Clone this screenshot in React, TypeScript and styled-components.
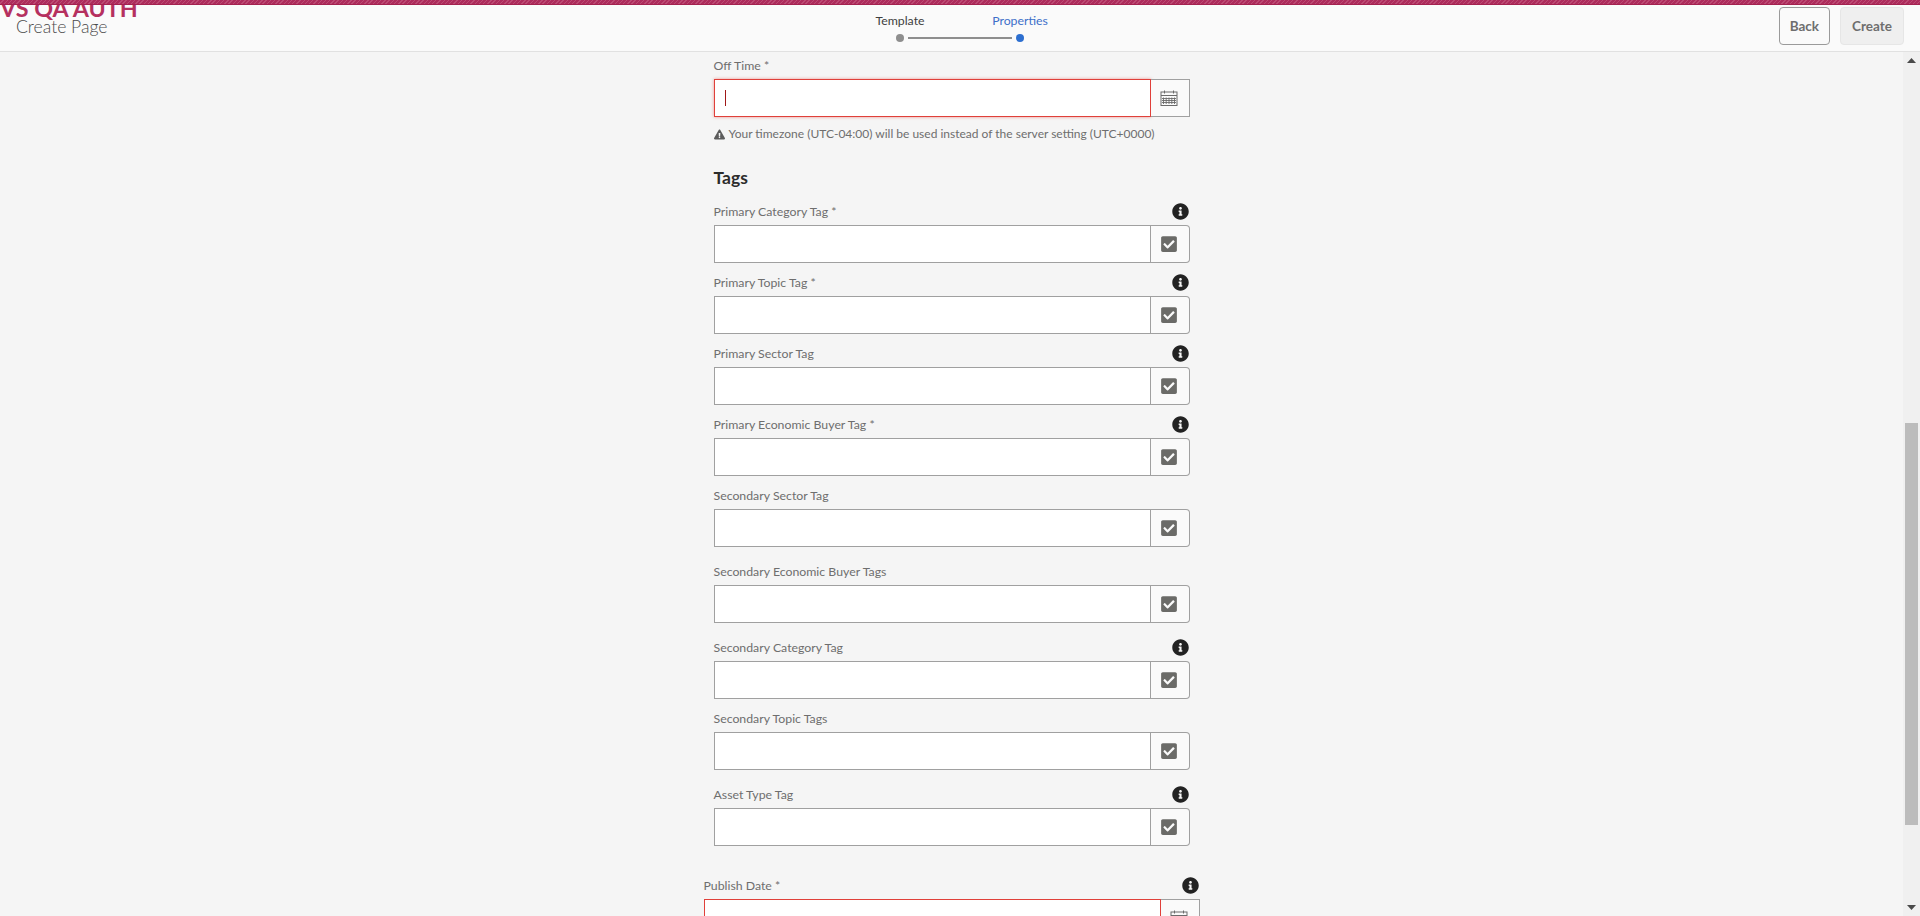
import React from 'react';
import styled, { createGlobalStyle } from 'styled-components';
import { FaCheckSquare, FaInfoCircle, FaExclamationTriangle } from 'react-icons/fa';

const GlobalStyle = createGlobalStyle`
  html, body {
    margin: 0;
    height: 100%;
    overflow: hidden;
    background: #f5f5f5;
    font-family: Lato, 'Open Sans', 'Liberation Sans', sans-serif;
  }
  * {
    box-sizing: border-box;
  }
`;

const Page = styled.div`
  height: 100vh;
  display: flex;
  flex-direction: column;
`;

const Stripe = styled.div`
  position: relative;
  z-index: 2;
  height: 5px;
  flex: none;
  background: repeating-linear-gradient(135deg, #ad2c5c 0 2px, #bb4a73 2px 3px);
  border-bottom: 1px solid #a3214f;
`;

const Header = styled.header`
  position: relative;
  height: 47px;
  flex: none;
  display: grid;
  grid-template-columns: 1fr auto 1fr;
  align-items: center;
  background: #fafafa;
  border-bottom: 1px solid #e1e1e1;
`;

const EnvName = styled.div`
  position: absolute;
  left: 0;
  top: -13px;
  font-size: 23.3px;
  line-height: 32px;
  font-weight: 700;
  color: #b5305f;
  white-space: nowrap;
`;

const PageTitle = styled.h1`
  margin: -4px 0 0 16px;
  font-size: 17.6px;
  font-weight: 300;
  color: #4b4b4b;
`;

const Stepper = styled.div`
  display: grid;
  grid-template-columns: 120px 120px;
  justify-items: center;
  margin-top: -3px;
`;

const Step = styled.div<{ $active?: boolean }>`
  position: relative;
  display: flex;
  flex-direction: column;
  align-items: center;
  gap: 4px;
  font-size: 12.3px;
  line-height: 18px;
  color: ${p => (p.$active ? '#3d6fc9' : '#3e3e3e')};
`;

const StepDot = styled.span<{ $active?: boolean }>`
  width: 8px;
  height: 8px;
  border-radius: 50%;
  background: ${p => (p.$active ? '#2d6fd0' : '#8e8e8e')};
`;

const StepLine = styled.span`
  position: absolute;
  left: calc(50% + 8px);
  bottom: 3px;
  width: 104px;
  height: 2px;
  background: #8e8e8e;
`;

const Actions = styled.div`
  justify-self: end;
  display: flex;
  gap: 10px;
  margin-right: 16px;
  margin-top: -4px;
`;

const Button = styled.button<{ $disabled?: boolean }>`
  height: 38px;
  padding: 0 ${p => (p.$disabled ? '11px' : '10px')};
  font-family: inherit;
  font-size: 13.5px;
  font-weight: 700;
  color: #6e6e6e;
  border-radius: 4px;
  background: ${p => (p.$disabled ? '#efefef' : '#fafafa')};
  border: 1px solid ${p => (p.$disabled ? '#e6e6e6' : '#9a9a9a')};
`;

const Body = styled.div`
  flex: 1;
  min-height: 0;
  display: flex;
`;

const Content = styled.main`
  flex: 1;
  min-width: 0;
  overflow: hidden;
  padding-top: 3px;
`;

const Column = styled.div<{ $wide?: boolean }>`
  width: ${p => (p.$wide ? '496px' : '476px')};
  margin: ${p => (p.$wide ? '29px' : '0')} auto 0;
`;

const Field = styled.div<{ $tight?: boolean }>`
  margin-bottom: ${p => (p.$tight ? '9px' : '14px')};
`;

const LabelRow = styled.div`
  height: 20px;
  margin-bottom: 4px;
  display: flex;
  align-items: center;
  justify-content: space-between;
`;

const Label = styled.label`
  font-size: 12.3px;
  color: #6e6e6e;
`;

const InfoIcon = styled(FaInfoCircle)`
  width: 17px;
  height: 17px;
  margin-right: 1px;
  color: #222;
`;

const InputGroup = styled.div`
  position: relative;
  display: flex;
  height: 38px;
`;

const Input = styled.input<{ $invalid?: boolean; $focused?: boolean }>`
  flex: 1;
  min-width: 0;
  height: 100%;
  padding: 0 10px;
  background: #fff;
  outline: none;
  border: 1px solid ${p => (p.$invalid ? '#e0403a' : '#a0a0a0')};
  box-shadow: ${p => (p.$focused ? '0 0 3px rgba(224, 64, 58, 0.55)' : 'none')};
`;

const Caret = styled.span`
  position: absolute;
  left: 11px;
  top: 11px;
  width: 1px;
  height: 16px;
  background: #a01818;
`;

const AddonButton = styled.div<{ $rounded?: boolean }>`
  flex: none;
  width: 39px;
  display: flex;
  align-items: center;
  justify-content: center;
  background: #fafafa;
  border: 1px solid #a0a0a0;
  border-left: none;
  border-radius: ${p => (p.$rounded ? '0 4px 4px 0' : '0')};
`;

const CheckIcon = styled(FaCheckSquare)`
  width: 18px;
  height: 18px;
  margin-right: 1px;
  color: #6b6b68;
`;

const Hint = styled.div`
  display: flex;
  align-items: center;
  gap: 4px;
  margin-top: 8px;
  font-size: 12px;
  line-height: 18px;
  color: #6e6e6e;
  white-space: nowrap;
`;

const WarnIcon = styled(FaExclamationTriangle)`
  width: 11px;
  height: 11px;
  color: #5c5c5c;
`;

const SectionTitle = styled.h2`
  margin: 23px 0 11px;
  font-size: 17.5px;
  line-height: 24px;
  font-weight: 700;
  color: #2c2c2c;
`;

const Scrollbar = styled.div`
  flex: none;
  width: 17px;
  position: relative;
  background: #f0f0f0;
  display: flex;
  flex-direction: column;
  align-items: center;
`;

const ScrollThumb = styled.div`
  width: 13px;
  height: 402px;
  margin-top: 371px;
  background: #bcbcbc;
`;

const ScrollArrow = styled.svg<{ $end?: boolean }>`
  position: absolute;
  left: 4px;
  ${p => (p.$end ? 'bottom: 6px;' : 'top: 6px;')}
  width: 9px;
  height: 5px;
  fill: #4a4a4a;
`;

const CalendarIcon = () => (
  <svg width="18" height="18" viewBox="0 0 18 18" fill="none" stroke="#6b6b6b" strokeWidth="1" style={{ marginRight: 2 }}>
    <rect x="1" y="3" width="16" height="13.5" />
    <path d="M1 6.5h16M4.5 1.5v3M13.5 1.5v3" />
    <path d="M3.5 8.5v6.5M6.2 8.5v6.5M9 8.5v6.5M11.8 8.5v6.5M14.5 8.5v6.5M2 9.5h14M2 11.5h14M2 13.5h14" strokeWidth="0.9" />
  </svg>
);

const tagFields = [
  { label: 'Primary Category Tag *', info: true },
  { label: 'Primary Topic Tag *', info: true },
  { label: 'Primary Sector Tag', info: true },
  { label: 'Primary Economic Buyer Tag *', info: true },
  { label: 'Secondary Sector Tag', info: false },
  { label: 'Secondary Economic Buyer Tags', info: false },
  { label: 'Secondary Category Tag', info: true },
  { label: 'Secondary Topic Tags', info: false },
  { label: 'Asset Type Tag', info: true },
];

const App: React.FC = () => {
  return (
    <Page>
      <GlobalStyle />
      <Stripe />
      <Header>
        <EnvName>VS QA AUTH</EnvName>
        <PageTitle>Create Page</PageTitle>
        <Stepper>
          <Step>
            Template
            <StepDot />
            <StepLine />
          </Step>
          <Step $active>
            Properties
            <StepDot $active />
          </Step>
        </Stepper>
        <Actions>
          <Button>Back</Button>
          <Button $disabled>Create</Button>
        </Actions>
      </Header>
      <Body>
        <Content>
          <Column>
            <LabelRow>
              <Label>Off Time *</Label>
            </LabelRow>
            <InputGroup>
              <Input $invalid $focused />
              <Caret />
              <AddonButton>
                <CalendarIcon />
              </AddonButton>
            </InputGroup>
            <Hint>
              <WarnIcon />
              Your timezone (UTC-04:00) will be used instead of the server setting (UTC+0000)
            </Hint>
            <SectionTitle>Tags</SectionTitle>
            {tagFields.map(field => (
              <Field key={field.label} $tight={field.info}>
                <LabelRow>
                  <Label>{field.label}</Label>
                  {field.info && <InfoIcon />}
                </LabelRow>
                <InputGroup>
                  <Input />
                  <AddonButton $rounded>
                    <CheckIcon />
                  </AddonButton>
                </InputGroup>
              </Field>
            ))}
          </Column>
          <Column $wide>
            <Field>
              <LabelRow>
                <Label>Publish Date *</Label>
                <InfoIcon />
              </LabelRow>
              <InputGroup>
                <Input $invalid />
                <AddonButton>
                  <CalendarIcon />
                </AddonButton>
              </InputGroup>
            </Field>
          </Column>
        </Content>
        <Scrollbar>
          <ScrollArrow viewBox="0 0 9 5">
            <path d="M4.5 0L9 5H0z" />
          </ScrollArrow>
          <ScrollThumb />
          <ScrollArrow viewBox="0 0 9 5" $end>
            <path d="M0 0h9L4.5 5z" />
          </ScrollArrow>
        </Scrollbar>
      </Body>
    </Page>
  );
};

export default App;
